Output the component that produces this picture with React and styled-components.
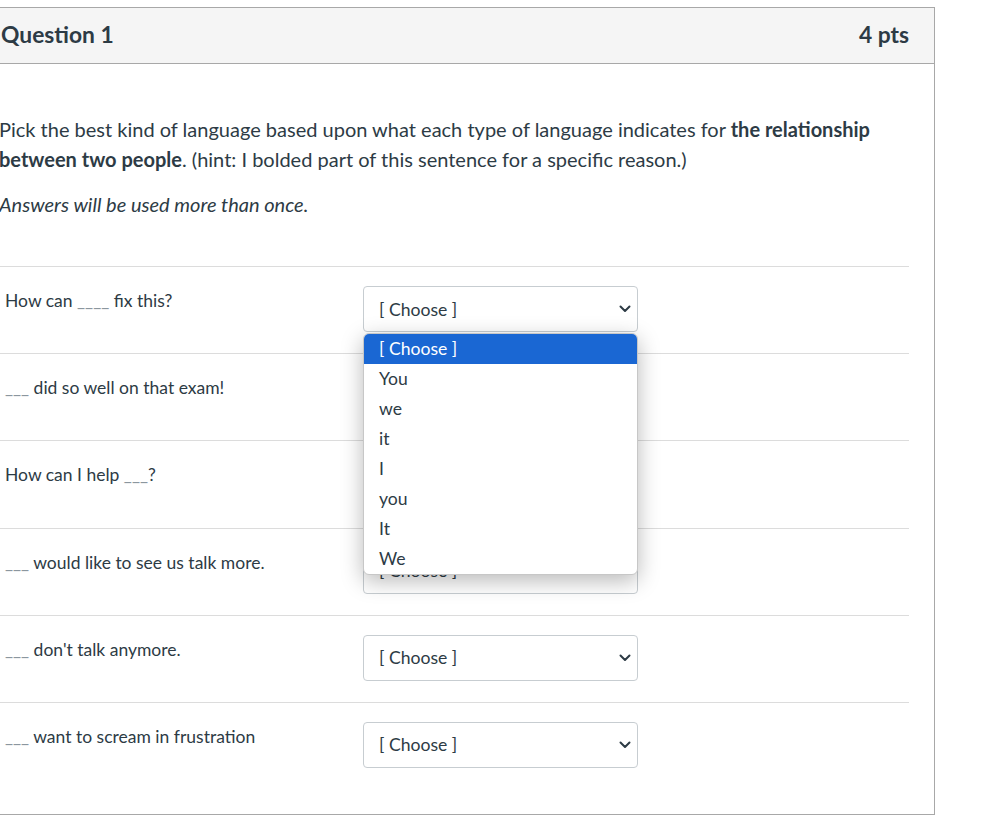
import React from "react";
import styled, { createGlobalStyle } from "styled-components";

const Global = createGlobalStyle`
  html, body { margin: 0; padding: 0; background: #fff; }
  body {
    font-family: Lato, "Noto Sans", sans-serif;
    color: #2d3b45;
    overflow: hidden;
  }
`;

const Page = styled.div`
  width: 991px;
  height: 819px;
  overflow: hidden;
  padding-top: 7px;
  box-sizing: border-box;
`;

const Card = styled.div`
  position: relative;
  margin-left: -26px;
  width: 961px;
  box-sizing: border-box;
  border: 1px solid #a8a8a8;
  background: #fff;
`;

const Header = styled.div`
  display: flex;
  justify-content: space-between;
  align-items: center;
  height: 56px;
  padding: 0 25px 4px 26px;
  box-sizing: border-box;
  background: #f5f5f5;
  border-bottom: 1px solid #a8a8a8;
`;

const HeaderTitle = styled.span`
  font-size: 22.8px;
  font-weight: 700;
  color: #2d3b45;
`;

const Body = styled.div`
  padding: 50px 25px 25px 24px;
  font-size: 20px;
`;

const Para = styled.p`
  margin: 0;
  line-height: 30px;
  font-style: ${(p) => (p.$italic ? "italic" : "normal")};
  & + & { margin-top: 15px; }
`;

const Rows = styled.div`
  margin-top: 47px;
  position: relative;
`;

const Row = styled.div`
  display: grid;
  grid-template-columns: 364px 275px;
  border-top: 1px solid #dcdcdc;
  padding: 19px 0 21.2px;
`;

const Label = styled.div`
  padding-left: 6px;
  line-height: 30px;
  font-size: 17.5px;
`;

const Blank = styled.span`
  color: #8b969e;
`;

const SelectBox = styled.div`
  position: relative;
  height: 46px;
  box-sizing: border-box;
  border: 1px solid #c7cdd1;
  border-radius: 4px;
  background: #fff;
  display: flex;
  align-items: center;
  justify-content: space-between;
  padding: 0 6px 0 15px;
  font-size: 17.6px;
`;

const Chevron = styled.svg`
  width: 12px;
  height: 8px;
  flex: none;
`;

const Menu = styled.ul`
  position: absolute;
  left: -1px;
  top: 46px;
  width: 275px;
  margin: 0;
  padding: 0;
  list-style: none;
  background: #fff;
  border: 1px solid #c7c7c7;
  box-sizing: border-box;
  border-radius: 6px;
  overflow: hidden;
  box-shadow: 0 6px 22px rgba(0, 0, 0, 0.28);
  z-index: 5;
`;

const Option = styled.li`
  height: 30px;
  line-height: 30px;
  padding-left: 15px;
  font-size: 17.6px;
  background: ${(p) => (p.$active ? "#1a67d3" : "transparent")};
  color: ${(p) => (p.$active ? "#fff" : "#2d3b45")};
`;

const Select = ({ open }) => (
  <SelectBox>
    <span>[ Choose ]</span>
    <Chevron viewBox="0 0 12 8">
      <path d="M1.5 1.5 L6 6 L10.5 1.5" fill="none" stroke="#2d3b45" strokeWidth="2" strokeLinecap="round" strokeLinejoin="round" />
    </Chevron>
    {open && (
      <Menu>
        {["[ Choose ]", "You", "we", "it", "I", "you", "It", "We"].map((o, i) => (
          <Option key={i} $active={i === 0}>{o}</Option>
        ))}
      </Menu>
    )}
  </SelectBox>
);

const rows = [
  { pre: "How can ", blank: "____", post: " fix this?" },
  { pre: "", blank: "___", post: " did so well on that exam!" },
  { pre: "How can I help ", blank: "___", post: "?" },
  { pre: "", blank: "___", post: " would like to see us talk more." },
  { pre: "", blank: "___", post: " don't talk anymore." },
  { pre: "", blank: "___", post: " want to scream in frustration" },
];

export default function App() {
  return (
    <Page>
      <Global />
      <Card>
        <Header>
          <HeaderTitle>Question 1</HeaderTitle>
          <HeaderTitle>4 pts</HeaderTitle>
        </Header>
        <Body>
          <Para>
            Pick the best kind of language based upon what each type of language indicates for{" "}
            <strong>the relationship between two people</strong>. (hint: I bolded part of this sentence for a specific reason.)
          </Para>
          <Para $italic>Answers will be used more than once.</Para>
          <Rows>
            {rows.map((r, i) => (
              <Row key={i}>
                <Label>
                  {r.pre}
                  <Blank>{r.blank}</Blank>
                  {r.post}
                </Label>
                <Select open={i === 0} />
              </Row>
            ))}
          </Rows>
        </Body>
      </Card>
    </Page>
  );
}
